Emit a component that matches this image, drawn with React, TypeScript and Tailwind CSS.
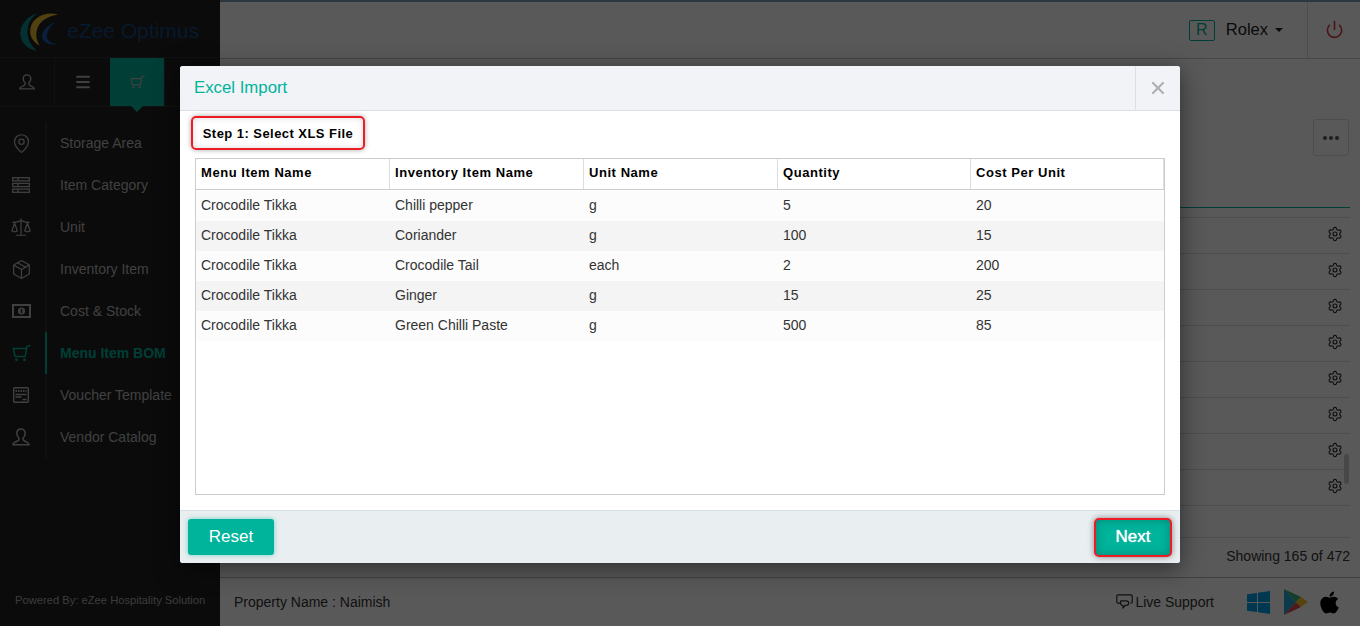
import React from "react";
import { MapPin, Scale, Package, Settings, Power, Menu, X } from "lucide-react";
import { FaApple } from "react-icons/fa";

const font = { fontFamily: '"Liberation Sans", Arial, sans-serif' };

function UserIcon({ size = 20 }: { size?: number }) {
  return (
    <svg width={size} height={size} viewBox="0 0 24 24" fill="none" stroke="currentColor" strokeWidth="1.8" strokeLinejoin="round">
      <path d="M12 2.500c-3 0-5 2.200-5 5.200 0 2.300 1 4.200 2.500 5.500v1.600c0 .8-.5 1.300-1.300 1.700L3.500 19c-.9.4-1.200 1-1.200 2.200h19.400c0-1.200-.3-1.800-1.200-2.200l-4.700-2.500c-.8-.4-1.300-.9-1.300-1.700v-1.600C16 11.900 17 10 17 7.700c0-3-2-5.200-5-5.200z" />
    </svg>
  );
}

function CartIcon({ size = 19 }: { size?: number }) {
  return (
    <svg width={size} height={size} viewBox="0 0 19 19" fill="none" stroke="currentColor" strokeWidth="1.500" strokeLinejoin="round">
      <path d="M18.500 1.500l-3.500.7-1.800 10.300H3.200L1.300 4.500H14.800" />
      <circle cx="4.500" cy="15.800" r="1.400" fill="currentColor" stroke="none" />
      <circle cx="12.500" cy="15.800" r="1.400" fill="currentColor" stroke="none" />
    </svg>
  );
}

function ListIcon() {
  return (
    <svg width="18" height="16" viewBox="0 0 18 16" fill="none" stroke="currentColor" strokeWidth="1.300">
      <rect x=".7" y=".7" width="16.600" height="3.200" />
      <rect x=".7" y="6.400" width="16.600" height="3.200" />
      <rect x=".7" y="12.100" width="16.600" height="3.200" />
      <path d="M6 .7v3.200M6 6.400v3.200M6 12.100v3.200" />
    </svg>
  );
}

function MoneyIcon() {
  return (
    <svg width="19" height="14" viewBox="0 0 19 14">
      <path fillRule="evenodd" fill="currentColor" d="M0 0h19v14H0zM2 2v10h15V2z" />
      <ellipse cx="9.500" cy="7" rx="7" ry="5" fill="#202020" />
      <circle cx="9.500" cy="7" r="3.600" fill="currentColor" />
      <rect x="8.800" y="4.800" width="1.500" height="4.400" fill="#202020" />
    </svg>
  );
}

function VoucherIcon() {
  return (
    <svg width="16" height="16" viewBox="0 0 16 16" fill="none" stroke="currentColor" strokeWidth="1.400">
      <rect x=".7" y=".7" width="14.600" height="14.600" rx="1" />
      <path d="M2.500 4h11" strokeWidth="2" strokeDasharray="1.500 1" />
      <path d="M2.500 7.500h11M2.500 10h6M9.500 12.500h4" />
    </svg>
  );
}

function Logo() {
  return (
    <svg width="40" height="41" viewBox="0 0 40 41">
      <path d="M19 2C6 6 0 16 1.500 25 3 33 9 38 18 40 10 33 7 24 9 16 10 10 14 5 19 2z" fill="#0f8a8f" />
      <path d="M39 3.500C27 0 15 6 12 15 9 24 14 31 21 35 17 29 16 22 19 16 22 9 30 5 39 3.500z" fill="#e8b92e" />
      <path d="M37 11C28 14 23 20 23 25 23 31 30 35 39 33 32 33 27 29 28 24 29 19 32 14 37 11z" fill="#1b5aa8" />
    </svg>
  );
}

function WindowsIcon() {
  return (
    <svg width="23" height="23" viewBox="0 0 23 23" fill="#00a2e8">
      <path d="M0 3.300L10 1.900v9H0zM11 1.700L23 0v10.900H11zM0 12h10v9.100L0 19.700zM11 12h12v11l-12-1.700z" />
    </svg>
  );
}

function PlayIcon() {
  return (
    <svg width="24" height="26" viewBox="0 0 24 26">
      <path d="M0 0v26l12-13z" fill="#23a6d8" />
      <path d="M0 0l12 13 5-5z" fill="#3bb27a" />
      <path d="M0 26l12-13 5 5z" fill="#e5484d" />
      <path d="M17 8l-5 5 5 5 7-5z" fill="#f7c52b" />
    </svg>
  );
}

function SupportIcon() {
  return (
    <svg width="17" height="16" viewBox="0 0 17 16" fill="none" stroke="currentColor" strokeWidth="1.200" strokeLinejoin="round">
      <path d="M2 .8h13c.7 0 1.200.5 1.200 1.200v6c0 .7-.5 1.200-1.200 1.200h-.5M4.500 9.200H2c-.7 0-1.200-.5-1.200-1.200V2C.8 1.300 1.300.8 2 .8" />
      <path d="M4.800 6.800h5.400c1.500 0 2.500 1 2.500 2.300s-1 2.300-2.500 2.300H9l-2 2.800v-2.800c-1.400 0-2.500-1-2.500-2.300z" />
    </svg>
  );
}

const nav: { label: string; icon: React.ReactNode; active?: boolean }[] = [
  { label: "Storage Area", icon: <MapPin size={21} strokeWidth={1.4} /> },
  { label: "Item Category", icon: <ListIcon /> },
  { label: "Unit", icon: <Scale size={22} strokeWidth={1.3} /> },
  { label: "Inventory Item", icon: <Package size={21} strokeWidth={1.4} /> },
  { label: "Cost & Stock", icon: <MoneyIcon /> },
  { label: "Menu Item BOM", icon: <CartIcon />, active: true },
  { label: "Voucher Template", icon: <VoucherIcon /> },
  { label: "Vendor Catalog", icon: <UserIcon /> },
];

const rows = [
  ["Crocodile Tikka", "Chilli pepper", "g", "5", "20"],
  ["Crocodile Tikka", "Coriander", "g", "100", "15"],
  ["Crocodile Tikka", "Crocodile Tail", "each", "2", "200"],
  ["Crocodile Tikka", "Ginger", "g", "15", "25"],
  ["Crocodile Tikka", "Green Chilli Paste", "g", "500", "85"],
];
const heads = ["Menu Item Name", "Inventory Item Name", "Unit Name", "Quantity", "Cost Per Unit"];
const cols = ["w-[194px]", "w-[194px]", "w-[194px]", "w-[193px]", "w-[193px]"];

export default function App() {
  return (
    <div className="relative flex h-[626px] w-[1360px] overflow-hidden bg-white text-[#333]" style={font}>
      <aside className="flex h-full w-[220px] shrink-0 flex-col bg-[#202020] text-[#b8b8b8]">
        <div className="flex h-[58px] items-center gap-[8px] border-b border-[#333] pl-[19px] pt-[5px]">
          <Logo />
          <span className="text-[21px] text-[#15487f]">eZee Optimus</span>
        </div>
        <div className="flex h-[49px] border-b border-[#333]">
          <div className="flex w-[55px] items-center justify-center border-r border-[#333]"><UserIcon size={18} /></div>
          <div className="flex w-[55px] items-center justify-center"><Menu size={18} strokeWidth={2.5} /></div>
          <div className="relative flex w-[54px] items-center justify-center bg-[#00b39b]">
            <CartIcon size={15} />
            <div className="absolute -bottom-[6px] left-[21px] h-0 w-0 border-x-[6px] border-t-[6px] border-x-transparent border-t-[#00b39b]" />
          </div>
          <div className="flex-1 border-l border-[#333]" />
        </div>
        <nav className="mt-[15px] flex flex-col">
          {nav.map((n) => (
            <div key={n.label} className={`flex h-[42px] items-center ${n.active ? "text-[#00b39b]" : ""}`}>
              <div className="flex w-[45px] justify-center pr-[3px]">{n.icon}</div>
              <div className={`flex h-full items-center border-l-2 pl-[13px] text-[14px] ${n.active ? "border-[#00b39b] font-bold" : "border-[#333]"}`}>
                {n.label}
              </div>
            </div>
          ))}
        </nav>
        <div className="mt-auto pb-[17px] pl-[15px] text-[11.2px] text-[#aaa]">Powered By: eZee Hospitality Solution</div>
      </aside>

      <main className="flex h-full min-w-0 flex-1 flex-col">
        <header className="flex h-[59px] items-center justify-end border-b border-[#ccc] border-t-2 border-t-[#7f9fb8]">
          <span className="flex h-[21px] w-[26px] items-center justify-center rounded-[2px] border border-[#00b39b] text-[16px] text-[#00b39b]">R</span>
          <span className="mb-[2px] ml-[11px] text-[16.5px] text-[#222]">Rolex</span>
          <span className="ml-[7px] h-0 w-0 border-x-[4px] border-t-[4px] border-x-transparent border-t-[#222]" />
          <div className="ml-[24px] flex h-full w-[53px] items-center justify-center border-l border-[#ddd] pb-[2px] text-[#d83535]">
            <Power size={19} strokeWidth={2} />
          </div>
        </header>
        <section className="flex flex-1 flex-col pr-[10px]">
          <div className="flex h-[149px] shrink-0 flex-col items-end border-b border-[#00b39b] pt-[60px]">
            <div className="mr-px flex h-[37px] w-[36px] items-center justify-center gap-[2px] rounded-[3px] border border-[#ddd]">
              <span className="h-[4px] w-[4px] rounded-full bg-[#555]" />
              <span className="h-[4px] w-[4px] rounded-full bg-[#555]" />
              <span className="h-[4px] w-[4px] rounded-full bg-[#555]" />
            </div>
          </div>
          <div className="mt-[9px] flex flex-col border-t border-[#ddd]">
            {[0, 1, 2, 3, 4, 5, 6, 7].map((i) => (
              <div key={i} className="flex h-[36px] items-center justify-end border-b border-[#ddd] pb-[4px] pr-[7px] text-[#222]">
                <Settings size={16} strokeWidth={1.6} />
              </div>
            ))}
            <div className="h-[32px] border-b border-[#ddd]" />
          </div>
          <div className="flex flex-1 items-center justify-end pb-[2px] text-[14px]">Showing 165 of 472</div>
        </section>
        <footer className="flex h-[49px] items-center border-t border-[#bbb] pl-[14px] pr-[18px] text-[14px]">
          <span>Property Name : Naimish</span>
          <span className="ml-auto flex items-center gap-[2px]"><SupportIcon />Live Support</span>
          <span className="ml-[33px]"><WindowsIcon /></span>
          <span className="ml-[14px]"><PlayIcon /></span>
          <span className="ml-[9px] text-black"><FaApple size={25} /></span>
        </footer>
      </main>

      <div className="absolute right-[11px] top-[454px] h-[30px] w-[5px] rounded-[3px] bg-[#ccc]" />

      <div className="absolute inset-0 bg-black/65">
        <div className="mx-auto mt-[66px] flex h-[497px] w-[1000px] flex-col overflow-hidden rounded-[3px] bg-white shadow-[0_5px_25px_rgba(0,0,0,0.5)]">
          <div className="flex h-[45px] shrink-0 items-center border-b border-[#d8dfe8] bg-[#f1f3f7]">
            <div className="pl-[14px] text-[16.8px] text-[#00b39b]">Excel Import</div>
            <div className="ml-auto flex h-full w-[45px] items-center justify-center border-l border-[#d8dfe8] text-[#b0b0b0]">
              <X size={20} strokeWidth={2.6} />
            </div>
          </div>
          <div className="flex min-h-0 flex-1 flex-col px-[15px] pt-[5px]">
            <div className="-ml-[4px] flex h-[34px] w-[174px] items-center justify-center rounded-[5px] border-2 border-[#ee1c25] pt-[2px] text-[13px] font-bold tracking-[0.45px] text-black shadow-[0_0_5px_rgba(0,0,0,0.35),inset_0_0_6px_rgba(0,0,0,0.15)]">
              Step 1: Select XLS File
            </div>
            <div className="mt-[8px] h-[337px] w-[970px] border border-[#ccc]">
              <div className="mb-px flex h-[31px] border-b border-[#ccc] text-[13px] font-bold tracking-[0.55px] text-black">
                {heads.map((h, i) => (
                  <div key={h} className={`flex items-center border-r border-[#ddd] pb-[2px] pl-[5px] ${cols[i]}`}>{h}</div>
                ))}
              </div>
              {rows.map((r, i) => (
                <div key={i} className={`flex h-[30px] items-center pb-[2px] text-[14px] ${i % 2 ? "bg-[#f4f4f4]" : "bg-[#fcfcfc]"}`}>
                  {r.map((c, j) => (
                    <div key={j} className={`pl-[5px] ${cols[j]}`}>{c}</div>
                  ))}
                </div>
              ))}
            </div>
          </div>
          <div className="flex h-[53px] shrink-0 items-center justify-between border-t border-[#d8dfe8] bg-[#e9eef1] px-[8px]">
            <button className="h-[36px] w-[86px] rounded-[3px] bg-[#00b39b] text-[17px] text-white shadow-[0_0_5px_rgba(0,179,155,0.5)]">Reset</button>
            <button className="h-[39px] w-[78px] rounded-[5px] border-2 border-[#ee1c25] bg-[#00b39b] text-[17px] text-white shadow-[0_0_6px_rgba(0,0,0,0.45),inset_0_0_8px_rgba(0,80,70,0.45)] [text-shadow:0_0_1px_#fff]">Next</button>
          </div>
        </div>
      </div>
    </div>
  );
}
